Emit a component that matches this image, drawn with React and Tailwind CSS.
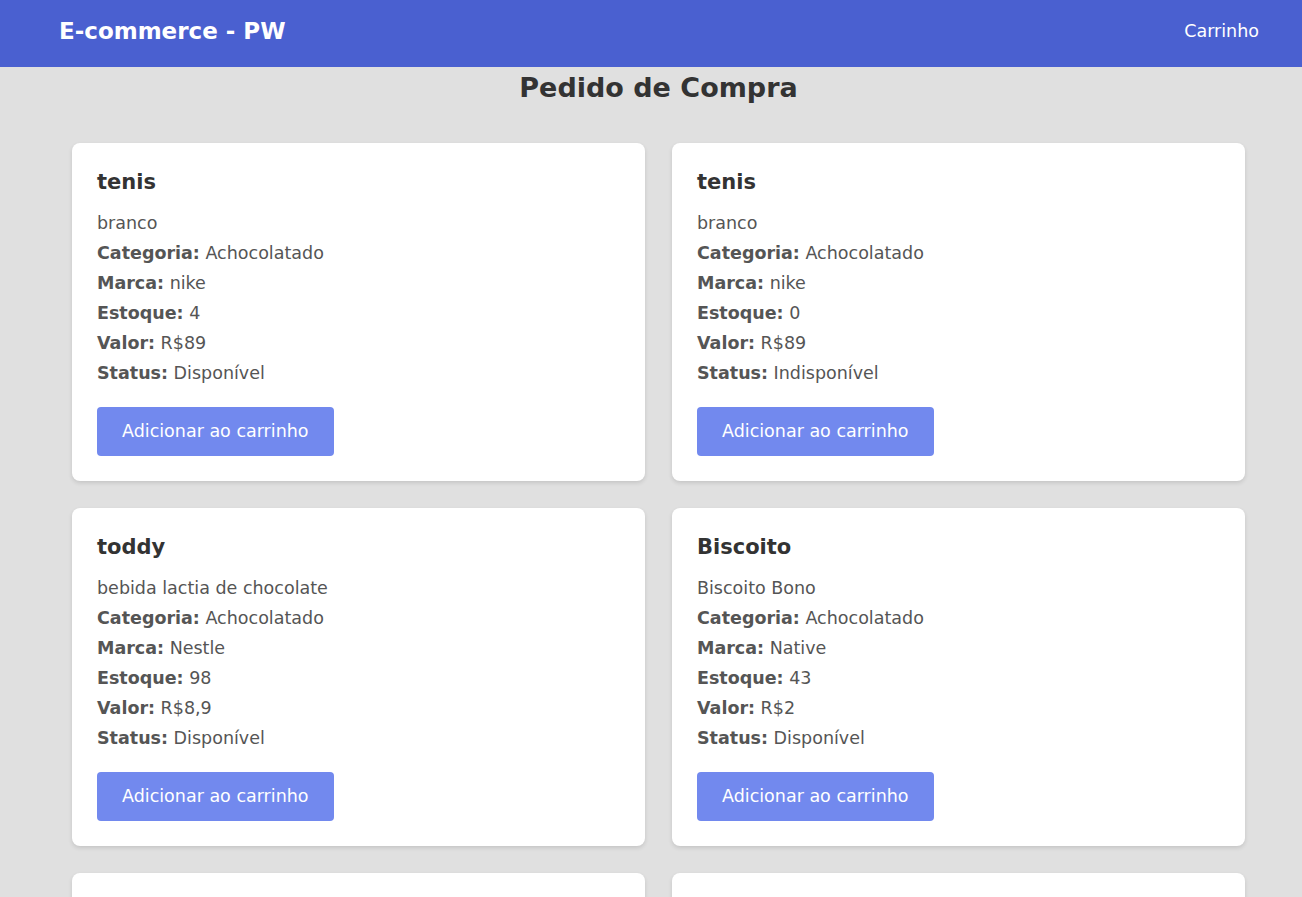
import React from 'react'

const produtos = [
  { nome: 'tenis', descricao: 'branco', categoria: 'Achocolatado', marca: 'nike', estoque: 4, valor: '89', status: 'Disponível' },
  { nome: 'tenis', descricao: 'branco', categoria: 'Achocolatado', marca: 'nike', estoque: 0, valor: '89', status: 'Indisponível' },
  { nome: 'toddy', descricao: 'bebida lactia de chocolate', categoria: 'Achocolatado', marca: 'Nestle', estoque: 98, valor: '8,9', status: 'Disponível' },
  { nome: 'Biscoito', descricao: 'Biscoito Bono', categoria: 'Achocolatado', marca: 'Native', estoque: 43, valor: '2', status: 'Disponível' },
  { nome: 'tenis', descricao: 'branco', categoria: 'Achocolatado', marca: 'nike', estoque: 4, valor: '89', status: 'Disponível' },
  { nome: 'tenis', descricao: 'branco', categoria: 'Achocolatado', marca: 'nike', estoque: 4, valor: '89', status: 'Disponível' }
]

function Card({ p }) {
  return (
    <div className="bg-white rounded-lg p-[25px] shadow-[0_2px_4px_rgba(0,0,0,0.12)]">
      <h3 className="text-[21px] leading-[28px] font-bold text-[#333]">{p.nome}</h3>
      <div className="mt-[12px] text-[17.5px] leading-[30px] text-[#555]">
        <p>{p.descricao}</p>
        <p><strong>Categoria:</strong> {p.categoria}</p>
        <p><strong>Marca:</strong> {p.marca}</p>
        <p><strong>Estoque:</strong> {p.estoque}</p>
        <p><strong>Valor:</strong> R${p.valor}</p>
        <p><strong>Status:</strong> {p.status}</p>
      </div>
      <button className="mt-[19px] h-[49px] px-[25px] rounded bg-[#7289ee] text-white text-[17.5px]">
        Adicionar ao carrinho
      </button>
    </div>
  )
}

export default function App() {
  return (
    <div className="min-h-screen bg-[#e0e0e0] font-['Tahoma','DejaVu_Sans',sans-serif]">
      {/* Header */}
      <header className="h-[67px] bg-[#4a60d0] flex items-center justify-between pl-[59px] pr-[43px] pb-1">
        <h1 className="text-white text-[23px] font-bold">E-commerce - PW</h1>
        <span className="text-white text-[17.5px]">Carrinho</span>
      </header>

      <main className="ml-[72px] mr-[57px]">
        <h2 className="text-center text-[27px] leading-[42px] font-bold text-[#333]">Pedido de Compra</h2>
        <div className="grid grid-cols-2 gap-[27px] mt-[34px] pb-8">
          {produtos.map((p, i) => (
            <Card key={i} p={p} />
          ))}
        </div>
      </main>
    </div>
  )
}
